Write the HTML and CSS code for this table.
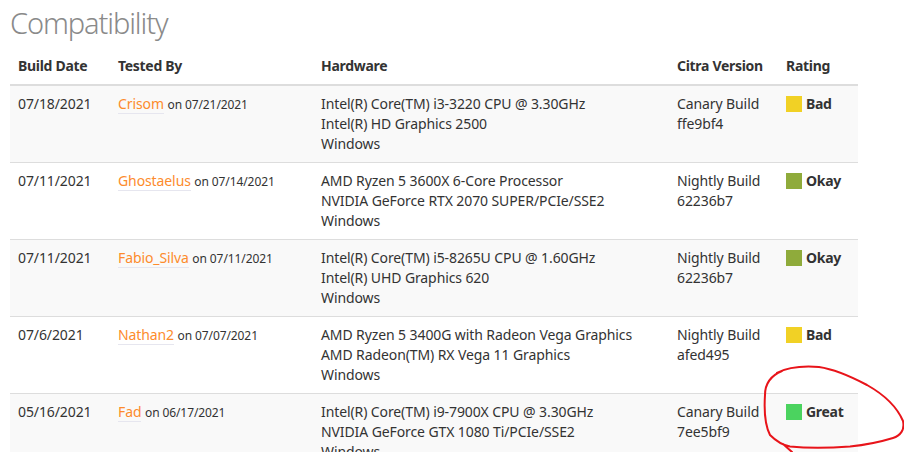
FILE: index.html
```html
<!DOCTYPE html>
<html>
<head>
<meta charset="utf-8">
<link rel="stylesheet" href="styles.css">
</head>
<body>
<div class="page">
  <h1 class="title">Compatibility</h1>
  <table class="compat">
    <colgroup>
      <col class="c-date"><col class="c-by"><col class="c-hw"><col class="c-ver"><col class="c-rate">
    </colgroup>
    <thead>
      <tr><th>Build Date</th><th>Tested By</th><th>Hardware</th><th>Citra Version</th><th>Rating</th></tr>
    </thead>
    <tbody>
      <tr>
        <td>07/18/2021</td>
        <td><a class="user">Crisom</a> <span class="on">on 07/21/2021</span></td>
        <td>Intel(R) Core(TM) i3-3220 CPU @ 3.30GHz<br>Intel(R) HD Graphics 2500<br>Windows</td>
        <td>Canary Build<br>ffe9bf4</td>
        <td><span class="rate"><span class="sq bad"></span>Bad</span></td>
      </tr>
      <tr>
        <td>07/11/2021</td>
        <td><a class="user">Ghostaelus</a> <span class="on">on 07/14/2021</span></td>
        <td>AMD Ryzen 5 3600X 6-Core Processor<br>NVIDIA GeForce RTX 2070 SUPER/PCIe/SSE2<br>Windows</td>
        <td>Nightly Build<br>62236b7</td>
        <td><span class="rate"><span class="sq okay"></span>Okay</span></td>
      </tr>
      <tr>
        <td>07/11/2021</td>
        <td><a class="user">Fabio_Silva</a> <span class="on">on 07/11/2021</span></td>
        <td>Intel(R) Core(TM) i5-8265U CPU @ 1.60GHz<br>Intel(R) UHD Graphics 620<br>Windows</td>
        <td>Nightly Build<br>62236b7</td>
        <td><span class="rate"><span class="sq okay"></span>Okay</span></td>
      </tr>
      <tr>
        <td>07/6/2021</td>
        <td><a class="user">Nathan2</a> <span class="on">on 07/07/2021</span></td>
        <td>AMD Ryzen 5 3400G with Radeon Vega Graphics<br>AMD Radeon(TM) RX Vega 11 Graphics<br>Windows</td>
        <td>Nightly Build<br>afed495</td>
        <td><span class="rate"><span class="sq bad"></span>Bad</span></td>
      </tr>
      <tr>
        <td>05/16/2021</td>
        <td><a class="user">Fad</a> <span class="on">on 06/17/2021</span></td>
        <td>Intel(R) Core(TM) i9-7900X CPU @ 3.30GHz<br>NVIDIA GeForce GTX 1080 Ti/PCIe/SSE2<br>Windows</td>
        <td>Canary Build<br>7ee5bf9</td>
        <td><span class="rate"><span class="sq great"></span>Great</span></td>
      </tr>
    </tbody>
  </table>
</div>
<svg class="scribble" width="904" height="452" viewBox="0 0 904 452">
  <path d="M777 373 C790 366 806 366 819 367 C833 369 850 376 867 385 C883 394 897 407 903 421 C905 430 900 436 893 438 C880 442 865 445 850 446.5 C830 448 810 448.5 790 446.5 C782 445 775 440 770 435 C765 425 764 410 765 395 C765 385 770 376 782 371 M783 444 L792 452" fill="none" stroke="#e8141a" stroke-width="2" stroke-linecap="round" stroke-linejoin="round"/>
</svg>
</body>
</html>
```
FILE: styles.css
```css
html, body {
  margin: 0;
  padding: 0;
  background: #fff;
}
body {
  font-family: "Noto Sans", "Open Sans", sans-serif;
  font-size: 14px;
  line-height: 20px;
  color: #333;
  position: relative;
  overflow: hidden;
  width: 904px;
  height: 452px;
}
.page {
  padding: 0 10px;
}
.title {
  margin: 0;
  padding-top: 2px;
  font-size: 29px;
  line-height: 42px;
  font-weight: 300;
  color: #8a8a8a;
  letter-spacing: -1.1px;
}
.compat {
  margin-top: 4px;
  width: 848px;
  border-collapse: collapse;
  table-layout: fixed;
  letter-spacing: -0.1px;
}
.c-date { width: 100px; }
.c-by { width: 203px; }
.c-hw { width: 356px; }
.c-ver { width: 109px; }
.c-rate { width: 80px; }
.compat th {
  text-align: left;
  font-weight: 700;
  padding: 8px;
  border-bottom: 2px solid #ddd;
  vertical-align: bottom;
  letter-spacing: -0.3px;
}
.compat td {
  padding: 8px;
  vertical-align: top;
  border-top: 1px solid #ddd;
}
.compat tbody tr:first-child td {
  border-top: 0;
}
.compat tbody tr:nth-child(odd) {
  background: #f9f9f9;
}
.user {
  color: #fd8b2c;
  text-decoration: none;
  border-bottom: 1px solid #e6e6ef;
}
.on {
  font-size: 12px;
}
.rate {
  display: flex;
  align-items: center;
  gap: 4px;
  font-weight: 700;
  color: #333;
  letter-spacing: -0.3px;
}
.sq {
  display: inline-block;
  width: 16px;
  height: 16px;
}
.bad { background: #f1d125; }
.okay { background: #8fab3b; }
.great { background: #4bd35f; }
.scribble {
  position: absolute;
  left: 0;
  top: 0;
  pointer-events: none;
}
```
